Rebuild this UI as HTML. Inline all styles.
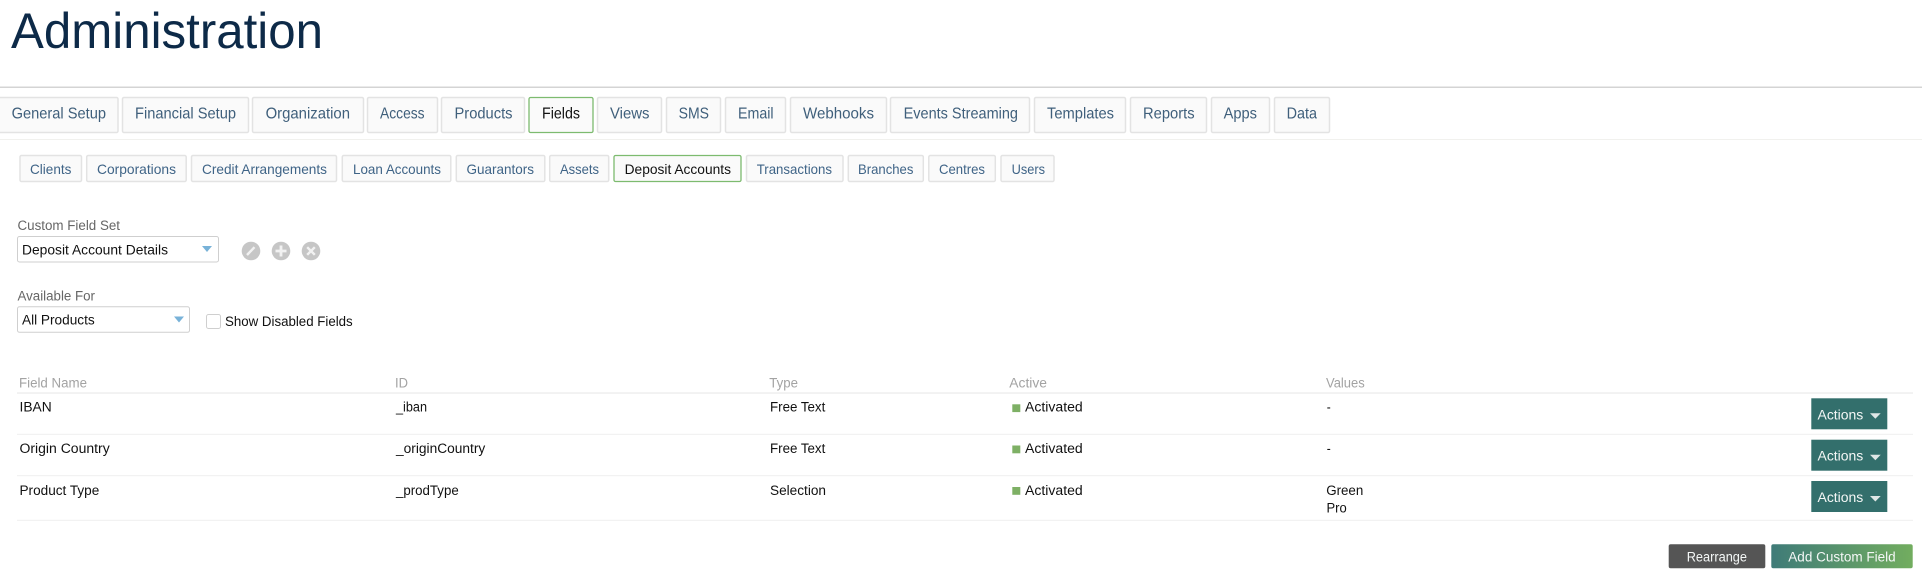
<!DOCTYPE html>
<html lang="en"><head><meta charset="utf-8"><title>Administration</title>
<style>
html,body{margin:0;padding:0;background:#fff;width:1922px;height:580px;overflow:hidden}
svg{display:block;filter:blur(.35px)}
text{font-family:"Liberation Sans",sans-serif;font-size:14px;fill:#111}
.ti{font-size:50px;fill:#0d2a48}
.t{font-size:16px;fill:#3f5f7b}
.s{font-size:14px;fill:#3f6487}
.on{fill:#111}
.l{font-size:14.2px;fill:#666}
.h{font-size:14.2px;fill:#a3a3a3}
.d{font-size:14.2px;fill:#111}
.b{font-size:14.2px;fill:#f4f7f6}
.tab{fill:#fafafa;stroke:#e3e3e3;stroke-width:1.5}
.act{fill:#fafafa;stroke:#7dbb6f;stroke-width:1.3}
.sel{fill:#fff;stroke:#cfcfcf;stroke-width:1}
.ln{fill:#eeeeee}
.sq{fill:#7eb065}
.ab{fill:#336f6c}
.car{fill:#dfe7e6}
.arr{fill:#78b2d8}
.ic{fill:#c6c6c6}
.ig{stroke:#f2f2f2;stroke-width:2.4;fill:none}
</style></head><body>
<svg width="1922" height="580" viewBox="0 0 1922 580" xmlns="http://www.w3.org/2000/svg">
<defs><linearGradient id="g" x1="0" x2="1" y1="0" y2="0"><stop offset="0" stop-color="#3f7b78"/><stop offset="1" stop-color="#72ad5f"/></linearGradient></defs>
<text class="ti" x="11" y="48" textLength="312" lengthAdjust="spacingAndGlyphs">Administration</text>
<rect x="0" y="86.5" width="1922" height="1.5" fill="#d4d4d4"/>
<rect x="0" y="139" width="1922" height="1" fill="#f1f1ee"/>

<rect class="tab" x="-4" y="97.5" width="122" height="35" rx="1.5"/>
<rect class="tab" x="122.5" y="97.5" width="126" height="35" rx="1.5"/>
<rect class="tab" x="252.5" y="97.5" width="111" height="35" rx="1.5"/>
<rect class="tab" x="367.5" y="97.5" width="70" height="35" rx="1.5"/>
<rect class="tab" x="441.5" y="97.5" width="83" height="35" rx="1.5"/>
<rect class="act" x="529" y="97.5" width="64" height="35" rx="1.5"/>
<rect class="tab" x="597.5" y="97.5" width="64" height="35" rx="1.5"/>
<rect class="tab" x="666.5" y="97.5" width="54" height="35" rx="1.5"/>
<rect class="tab" x="725.5" y="97.5" width="60" height="35" rx="1.5"/>
<rect class="tab" x="790.5" y="97.5" width="96" height="35" rx="1.5"/>
<rect class="tab" x="890.5" y="97.5" width="139" height="35" rx="1.5"/>
<rect class="tab" x="1034.5" y="97.5" width="91" height="35" rx="1.5"/>
<rect class="tab" x="1130.5" y="97.5" width="76" height="35" rx="1.5"/>
<rect class="tab" x="1211.5" y="97.5" width="58" height="35" rx="1.5"/>
<rect class="tab" x="1274.5" y="97.5" width="55" height="35" rx="1.5"/>
<text class="t" x="11.6" y="118.7" textLength="94.4" lengthAdjust="spacingAndGlyphs">General Setup</text>
<text class="t" x="135" y="118.7" textLength="101" lengthAdjust="spacingAndGlyphs">Financial Setup</text>
<text class="t" x="265.6" y="118.7" textLength="84.4" lengthAdjust="spacingAndGlyphs">Organization</text>
<text class="t" x="380" y="118.7" textLength="44.6" lengthAdjust="spacingAndGlyphs">Access</text>
<text class="t" x="454.5" y="118.7" textLength="58" lengthAdjust="spacingAndGlyphs">Products</text>
<text class="t on" x="542" y="118.7" textLength="38" lengthAdjust="spacingAndGlyphs">Fields</text>
<text class="t" x="610" y="118.7" textLength="39.5" lengthAdjust="spacingAndGlyphs">Views</text>
<text class="t" x="678.6" y="118.7" textLength="30.4" lengthAdjust="spacingAndGlyphs">SMS</text>
<text class="t" x="738" y="118.7" textLength="35.6" lengthAdjust="spacingAndGlyphs">Email</text>
<text class="t" x="803" y="118.7" textLength="71" lengthAdjust="spacingAndGlyphs">Webhooks</text>
<text class="t" x="903.6" y="118.7" textLength="114.4" lengthAdjust="spacingAndGlyphs">Events Streaming</text>
<text class="t" x="1047" y="118.7" textLength="67" lengthAdjust="spacingAndGlyphs">Templates</text>
<text class="t" x="1143" y="118.7" textLength="51.6" lengthAdjust="spacingAndGlyphs">Reports</text>
<text class="t" x="1223.6" y="118.7" textLength="33.4" lengthAdjust="spacingAndGlyphs">Apps</text>
<text class="t" x="1286.6" y="118.7" textLength="30.4" lengthAdjust="spacingAndGlyphs">Data</text>

<rect class="tab" x="20" y="155.5" width="61.5" height="26" rx="1.5"/>
<rect class="tab" x="86.7" y="155.5" width="99.5" height="26" rx="1.5"/>
<rect class="tab" x="191.5" y="155.5" width="145" height="26" rx="1.5"/>
<rect class="tab" x="342.3" y="155.5" width="108.5" height="26" rx="1.5"/>
<rect class="tab" x="456.3" y="155.5" width="88.5" height="26" rx="1.5"/>
<rect class="tab" x="549.7" y="155.5" width="59" height="26" rx="1.5"/>
<rect class="act" x="614" y="155.5" width="127" height="26" rx="1.5"/>
<rect class="tab" x="746.5" y="155.5" width="96.5" height="26" rx="1.5"/>
<rect class="tab" x="848.3" y="155.5" width="75" height="26" rx="1.5"/>
<rect class="tab" x="928.8" y="155.5" width="66.5" height="26" rx="1.5"/>
<rect class="tab" x="1001" y="155.5" width="53" height="26" rx="1.5"/>
<text class="s" x="30" y="174" textLength="41.4" lengthAdjust="spacingAndGlyphs">Clients</text>
<text class="s" x="97" y="174" textLength="79" lengthAdjust="spacingAndGlyphs">Corporations</text>
<text class="s" x="202" y="174" textLength="125" lengthAdjust="spacingAndGlyphs">Credit Arrangements</text>
<text class="s" x="353" y="174" textLength="88" lengthAdjust="spacingAndGlyphs">Loan Accounts</text>
<text class="s" x="466.5" y="174" textLength="67.5" lengthAdjust="spacingAndGlyphs">Guarantors</text>
<text class="s" x="560" y="174" textLength="39" lengthAdjust="spacingAndGlyphs">Assets</text>
<text class="s on" x="624.6" y="174" textLength="106.4" lengthAdjust="spacingAndGlyphs">Deposit Accounts</text>
<text class="s" x="756.7" y="174" textLength="75.3" lengthAdjust="spacingAndGlyphs">Transactions</text>
<text class="s" x="858" y="174" textLength="55.4" lengthAdjust="spacingAndGlyphs">Branches</text>
<text class="s" x="939" y="174" textLength="46" lengthAdjust="spacingAndGlyphs">Centres</text>
<text class="s" x="1011.6" y="174" textLength="33.4" lengthAdjust="spacingAndGlyphs">Users</text>

<text class="l" x="17.5" y="230" textLength="102.5" lengthAdjust="spacingAndGlyphs">Custom Field Set</text>
<rect class="sel" x="17.5" y="236.5" width="201" height="25.5" rx="2"/>
<text class="d" x="22" y="254.3" textLength="146" lengthAdjust="spacingAndGlyphs">Deposit Account Details</text>
<path class="arr" d="M202 246h10l-5 6z"/>
<circle class="ic" cx="251" cy="251" r="9.3"/><path class="ig" d="M247 255l7.5-7.8"/>
<circle class="ic" cx="281" cy="251" r="9.3"/><path class="ig" style="stroke-width:2.8" d="M275.5 251h11M281 245.5v11"/>
<circle class="ic" cx="311" cy="251" r="9.3"/><path class="ig" d="M307.200 247.200l7.600 7.600M314.800 247.200l-7.600 7.600"/>

<text class="l" x="17.5" y="300.3" textLength="77.5" lengthAdjust="spacingAndGlyphs">Available For</text>
<rect class="sel" x="17.5" y="306.8" width="172" height="25.5" rx="2"/>
<text class="d" x="22" y="324.3" textLength="72.7" lengthAdjust="spacingAndGlyphs">All Products</text>
<path class="arr" d="M174 316.500h10l-5 6z"/>
<rect x="206.500" y="314.500" width="14" height="14" rx="2" fill="#fff" stroke="#cfcfcf"/>
<text class="d" x="225" y="326" textLength="127.7" lengthAdjust="spacingAndGlyphs">Show Disabled Fields</text>

<text class="h" x="19" y="387.7" textLength="68" lengthAdjust="spacingAndGlyphs">Field Name</text>
<text class="h" x="395" y="387.7" textLength="13" lengthAdjust="spacingAndGlyphs">ID</text>
<text class="h" x="769.3" y="387.7" textLength="28.7" lengthAdjust="spacingAndGlyphs">Type</text>
<text class="h" x="1009.3" y="387.7" textLength="37.7" lengthAdjust="spacingAndGlyphs">Active</text>
<text class="h" x="1326" y="387.7" textLength="38.7" lengthAdjust="spacingAndGlyphs">Values</text>
<rect class="ln" x="17" y="392.3" width="1896" height="1.5"/>
<rect class="ln" x="17" y="433.8" width="1896" height="1"/>
<rect class="ln" x="17" y="475.2" width="1896" height="1"/>
<rect class="ln" x="17" y="519.8" width="1896" height="1"/>

<text class="d" x="19.5" y="411.7" textLength="32.2" lengthAdjust="spacingAndGlyphs">IBAN</text>
<text class="d" x="396" y="411.7" textLength="31" lengthAdjust="spacingAndGlyphs">_iban</text>
<text class="d" x="770" y="411.7" textLength="55.3" lengthAdjust="spacingAndGlyphs">Free Text</text>
<rect class="sq" x="1012.3" y="404.3" width="8" height="7.8"/>
<text class="d" x="1025" y="411.7" textLength="57.7" lengthAdjust="spacingAndGlyphs">Activated</text>
<text class="d" x="1326.8" y="411.7" textLength="4" lengthAdjust="spacingAndGlyphs">-</text>

<text class="d" x="19.5" y="453" textLength="90.2" lengthAdjust="spacingAndGlyphs">Origin Country</text>
<text class="d" x="396" y="453" textLength="89.3" lengthAdjust="spacingAndGlyphs">_originCountry</text>
<text class="d" x="770" y="453" textLength="55.3" lengthAdjust="spacingAndGlyphs">Free Text</text>
<rect class="sq" x="1012.3" y="445.5" width="8" height="7.8"/>
<text class="d" x="1025" y="453" textLength="57.7" lengthAdjust="spacingAndGlyphs">Activated</text>
<text class="d" x="1326.8" y="453" textLength="4" lengthAdjust="spacingAndGlyphs">-</text>

<text class="d" x="19.5" y="495" textLength="79.8" lengthAdjust="spacingAndGlyphs">Product Type</text>
<text class="d" x="396" y="495" textLength="62.7" lengthAdjust="spacingAndGlyphs">_prodType</text>
<text class="d" x="770" y="495" textLength="56" lengthAdjust="spacingAndGlyphs">Selection</text>
<rect class="sq" x="1012.3" y="487" width="8" height="7.8"/>
<text class="d" x="1025" y="495" textLength="57.7" lengthAdjust="spacingAndGlyphs">Activated</text>
<text class="d" x="1326.2" y="495" textLength="37.1" lengthAdjust="spacingAndGlyphs">Green</text>
<text class="d" x="1326.5" y="512.3" textLength="20.2" lengthAdjust="spacingAndGlyphs">Pro</text>

<rect class="ab" x="1811.3" y="398.3" width="76" height="31"/>
<text class="b" x="1817.500" y="419.3" textLength="45.8" lengthAdjust="spacingAndGlyphs">Actions</text>
<path class="car" d="M1870 413.3h10.7l-5.35 5.5z"/>
<rect class="ab" x="1811.3" y="439.7" width="76" height="31"/>
<text class="b" x="1817.500" y="460.7" textLength="45.8" lengthAdjust="spacingAndGlyphs">Actions</text>
<path class="car" d="M1870 454.7h10.7l-5.35 5.5z"/>
<rect class="ab" x="1811.3" y="481" width="76" height="31"/>
<text class="b" x="1817.500" y="502" textLength="45.8" lengthAdjust="spacingAndGlyphs">Actions</text>
<path class="car" d="M1870 496h10.7l-5.35 5.5z"/>

<rect x="1668.7" y="544.3" width="96.6" height="24" rx="2" fill="#555"/>
<text class="b" x="1686.7" y="561.7" textLength="60.3" lengthAdjust="spacingAndGlyphs">Rearrange</text>
<rect x="1771.3" y="544.3" width="141.4" height="24" rx="2" fill="url(#g)"/>
<text class="b" x="1788.3" y="561.7" textLength="107.4" lengthAdjust="spacingAndGlyphs">Add Custom Field</text>
</svg>
</body></html>
